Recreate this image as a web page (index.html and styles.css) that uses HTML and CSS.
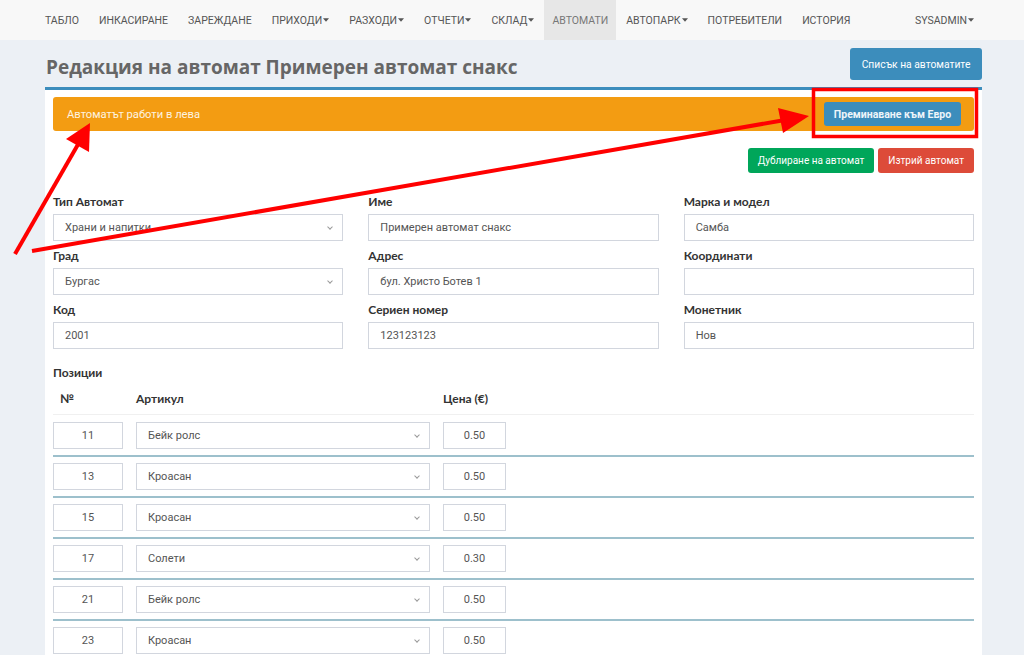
FILE: index.html
```html
<!DOCTYPE html>
<html lang="bg">
<head>
    <meta charset="UTF-8">
    <meta name="viewport" content="width=device-width, initial-scale=1.0">
    <title>Редакция на автомат</title>
    <link rel="stylesheet" href="styles.css">
</head>
<body>
    <nav class="topbar">
        <ul class="menu">
            <li><a href="#">Табло</a></li>
            <li><a href="#">Инкасиране</a></li>
            <li><a href="#">Зареждане</a></li>
            <li><a href="#">Приходи<svg class="caret" width="6" height="4" viewBox="0 0 7 4"><path d="M0 0h7L3.5 4z"/></svg></a></li>
            <li><a href="#">Разходи<svg class="caret" width="6" height="4" viewBox="0 0 7 4"><path d="M0 0h7L3.5 4z"/></svg></a></li>
            <li><a href="#">Отчети<svg class="caret" width="6" height="4" viewBox="0 0 7 4"><path d="M0 0h7L3.5 4z"/></svg></a></li>
            <li><a href="#">Склад<svg class="caret" width="6" height="4" viewBox="0 0 7 4"><path d="M0 0h7L3.5 4z"/></svg></a></li>
            <li class="active"><a href="#">Автомати</a></li>
            <li><a href="#">Автопарк<svg class="caret" width="6" height="4" viewBox="0 0 7 4"><path d="M0 0h7L3.5 4z"/></svg></a></li>
            <li><a href="#">Потребители</a></li>
            <li><a href="#">История</a></li>
        </ul>
        <ul class="menu menu-right">
            <li><a href="#">Sysadmin<svg class="caret" width="6" height="4" viewBox="0 0 7 4"><path d="M0 0h7L3.5 4z"/></svg></a></li>
        </ul>
    </nav>

    <div class="content">
        <div class="page-head">
            <h1>Редакция на автомат Примерен автомат снакс</h1>
            <a href="#" class="btn btn-primary btn-list">Списък на автоматите</a>
        </div>

        <div class="box">
            <div class="callout">
                <span>Автоматът работи в лева</span>
                <a href="#" class="btn btn-primary btn-euro">Преминаване към Евро</a>
            </div>

            <div class="actions">
                <a href="#" class="btn btn-success">Дублиране на автомат</a>
                <a href="#" class="btn btn-danger">Изтрий автомат</a>
            </div>

            <div class="form-grid">
                <div class="form-group">
                    <label>Тип Автомат</label>
                    <div class="field select">Храни и напитки<span class="chev"></span></div>
                </div>
                <div class="form-group">
                    <label>Име</label>
                    <div class="field">Примерен автомат снакс</div>
                </div>
                <div class="form-group">
                    <label>Марка и модел</label>
                    <div class="field">Самба</div>
                </div>
                <div class="form-group">
                    <label>Град</label>
                    <div class="field select">Бургас<span class="chev"></span></div>
                </div>
                <div class="form-group">
                    <label>Адрес</label>
                    <div class="field">бул. Христо Ботев 1</div>
                </div>
                <div class="form-group">
                    <label>Координати</label>
                    <div class="field"></div>
                </div>
                <div class="form-group">
                    <label>Код</label>
                    <div class="field">2001</div>
                </div>
                <div class="form-group">
                    <label>Сериен номер</label>
                    <div class="field">123123123</div>
                </div>
                <div class="form-group">
                    <label>Монетник</label>
                    <div class="field">Нов</div>
                </div>
            </div>

            <div class="section-title">Позиции</div>

            <div class="positions">
                <div class="pos-head">
                    <span class="col-num">№</span>
                    <span>Артикул</span>
                    <span>Цена (€)</span>
                </div>
                <div class="pos-row">
                    <div class="field center">11</div>
                    <div class="field select">Бейк ролс<span class="chev"></span></div>
                    <div class="field center">0.50</div>
                </div>
                <div class="pos-row">
                    <div class="field center">13</div>
                    <div class="field select">Кроасан<span class="chev"></span></div>
                    <div class="field center">0.50</div>
                </div>
                <div class="pos-row">
                    <div class="field center">15</div>
                    <div class="field select">Кроасан<span class="chev"></span></div>
                    <div class="field center">0.50</div>
                </div>
                <div class="pos-row">
                    <div class="field center">17</div>
                    <div class="field select">Солети<span class="chev"></span></div>
                    <div class="field center">0.30</div>
                </div>
                <div class="pos-row">
                    <div class="field center">21</div>
                    <div class="field select">Бейк ролс<span class="chev"></span></div>
                    <div class="field center">0.50</div>
                </div>
                <div class="pos-row">
                    <div class="field center">23</div>
                    <div class="field select">Кроасан<span class="chev"></span></div>
                    <div class="field center">0.50</div>
                </div>
            </div>
        </div>
    </div>

    <!-- annotation overlay -->
    <svg class="marks" width="1024" height="655" viewBox="0 0 1024 655">
        <rect x="813.5" y="89.5" width="163" height="47" fill="none" stroke="#ff0000" stroke-width="3.5"/>
        <line x1="15" y1="254" x2="80" y2="141" stroke="#ff0000" stroke-width="4"/>
        <polygon points="90,123 66,139 89,152" fill="#ff0000"/>
        <line x1="32" y1="251" x2="785" y2="120" stroke="#ff0000" stroke-width="4"/>
        <polygon points="809,116 778,108 783,133" fill="#ff0000"/>
    </svg>
</body>
</html>
```

FILE: styles.css
```css
body {
    font-family: Roboto, "Liberation Sans", Arial, sans-serif;
    font-size: 12px;
    color: #333;
    background-color: #ecf0f5;
    margin: 0;
    padding: 0;
}
a {
    text-decoration: none;
}
.topbar {
    display: flex;
    justify-content: space-between;
    height: 40px;
    background: #f8f8f8;
    padding: 0 42px 0 35px;
}
.menu {
    display: flex;
    list-style: none;
    margin: 0;
    padding: 0;
}
.menu li a {
    display: flex;
    align-items: center;
    height: 40px;
    padding: 0 10px;
    color: #555;
    font-size: 10.5px;
    text-transform: uppercase;
}
.menu li.active a {
    background: #e7e7e7;
    color: #777;
    padding: 0 8px;
}
.caret {
    margin-left: 1px;
    fill: #555;
}
.menu-right li a {
    padding-right: 8px;
}
.content {
    padding: 0 42px 0 45px;
}
.page-head {
    display: flex;
    justify-content: space-between;
    align-items: center;
    padding: 8px 0 7px;
}
h1 {
    margin: 6px 0 0 1px;
    font-family: "Open Sans", sans-serif;
    font-size: 19px;
    font-weight: 700;
    color: #666;
}
.btn {
    display: inline-flex;
    align-items: center;
    justify-content: center;
    color: #fff;
    border-radius: 3px;
    font-size: 10px;
}
.btn-primary {
    background: #3c8dbc;
}
.btn-success {
    background: #00a65a;
}
.btn-danger {
    background: #dd4b39;
}
.btn-list {
    width: 132px;
    height: 32px;
    font-size: 10.3px;
}
.box {
    background: #fff;
    border-top: 3px solid #3c8dbc;
    padding: 7px 8px 0;
    height: 600px;
}
.callout {
    display: flex;
    justify-content: space-between;
    align-items: center;
    height: 34px;
    background: #f39c12;
    border-radius: 3px;
    padding: 0 13px 0 14px;
    color: #fdf3e0;
    font-size: 11.2px;
}
.btn-euro {
    width: 137px;
    height: 24px;
    font-weight: bold;
    font-size: 10.5px;
    color: #eef5fa;
}
.actions {
    display: flex;
    justify-content: flex-end;
    gap: 4px;
    margin-top: 17px;
}
.actions .btn {
    height: 25px;
    padding: 0 10px;
}
.form-grid {
    display: grid;
    grid-template-columns: repeat(3, 1fr);
    column-gap: 25px;
    row-gap: 6px;
    margin-top: 20px;
}
.form-group label,
.section-title,
.pos-head {
    display: block;
    font-family: Lato, sans-serif;
    font-weight: 700;
    font-size: 12px;
    line-height: 17px;
    color: #333;
}
.form-group label {
    margin-bottom: 4px;
}
.field {
    position: relative;
    box-sizing: border-box;
    height: 27px;
    line-height: 25px;
    border: 1px solid #d2d6de;
    padding: 0 11px;
    color: #555;
    background: #fff;
    white-space: nowrap;
    font-size: 11px;
}
.field.center {
    text-align: center;
    padding: 0;
}
.chev {
    position: absolute;
    right: 10px;
    top: 10px;
    width: 3px;
    height: 3px;
    border-right: 1px solid #999;
    border-bottom: 1px solid #999;
    transform: rotate(45deg);
}
.section-title {
    margin-top: 15px;
}
.pos-head {
    display: grid;
    grid-template-columns: 70px 294px 63px;
    column-gap: 13px;
    padding: 9px 0 7px;
    border-bottom: 1px solid #f0f0f0;
}
.pos-head .col-num {
    padding-left: 7px;
}
.pos-row {
    display: grid;
    grid-template-columns: 70px 294px 63px;
    column-gap: 13px;
    padding: 7px 0 6px;
    border-bottom: 2px solid #9dc0cc;
}
.pos-row + .pos-row {
    padding-top: 6px;
}
.marks {
    position: absolute;
    top: 0;
    left: 0;
    pointer-events: none;
}
```
